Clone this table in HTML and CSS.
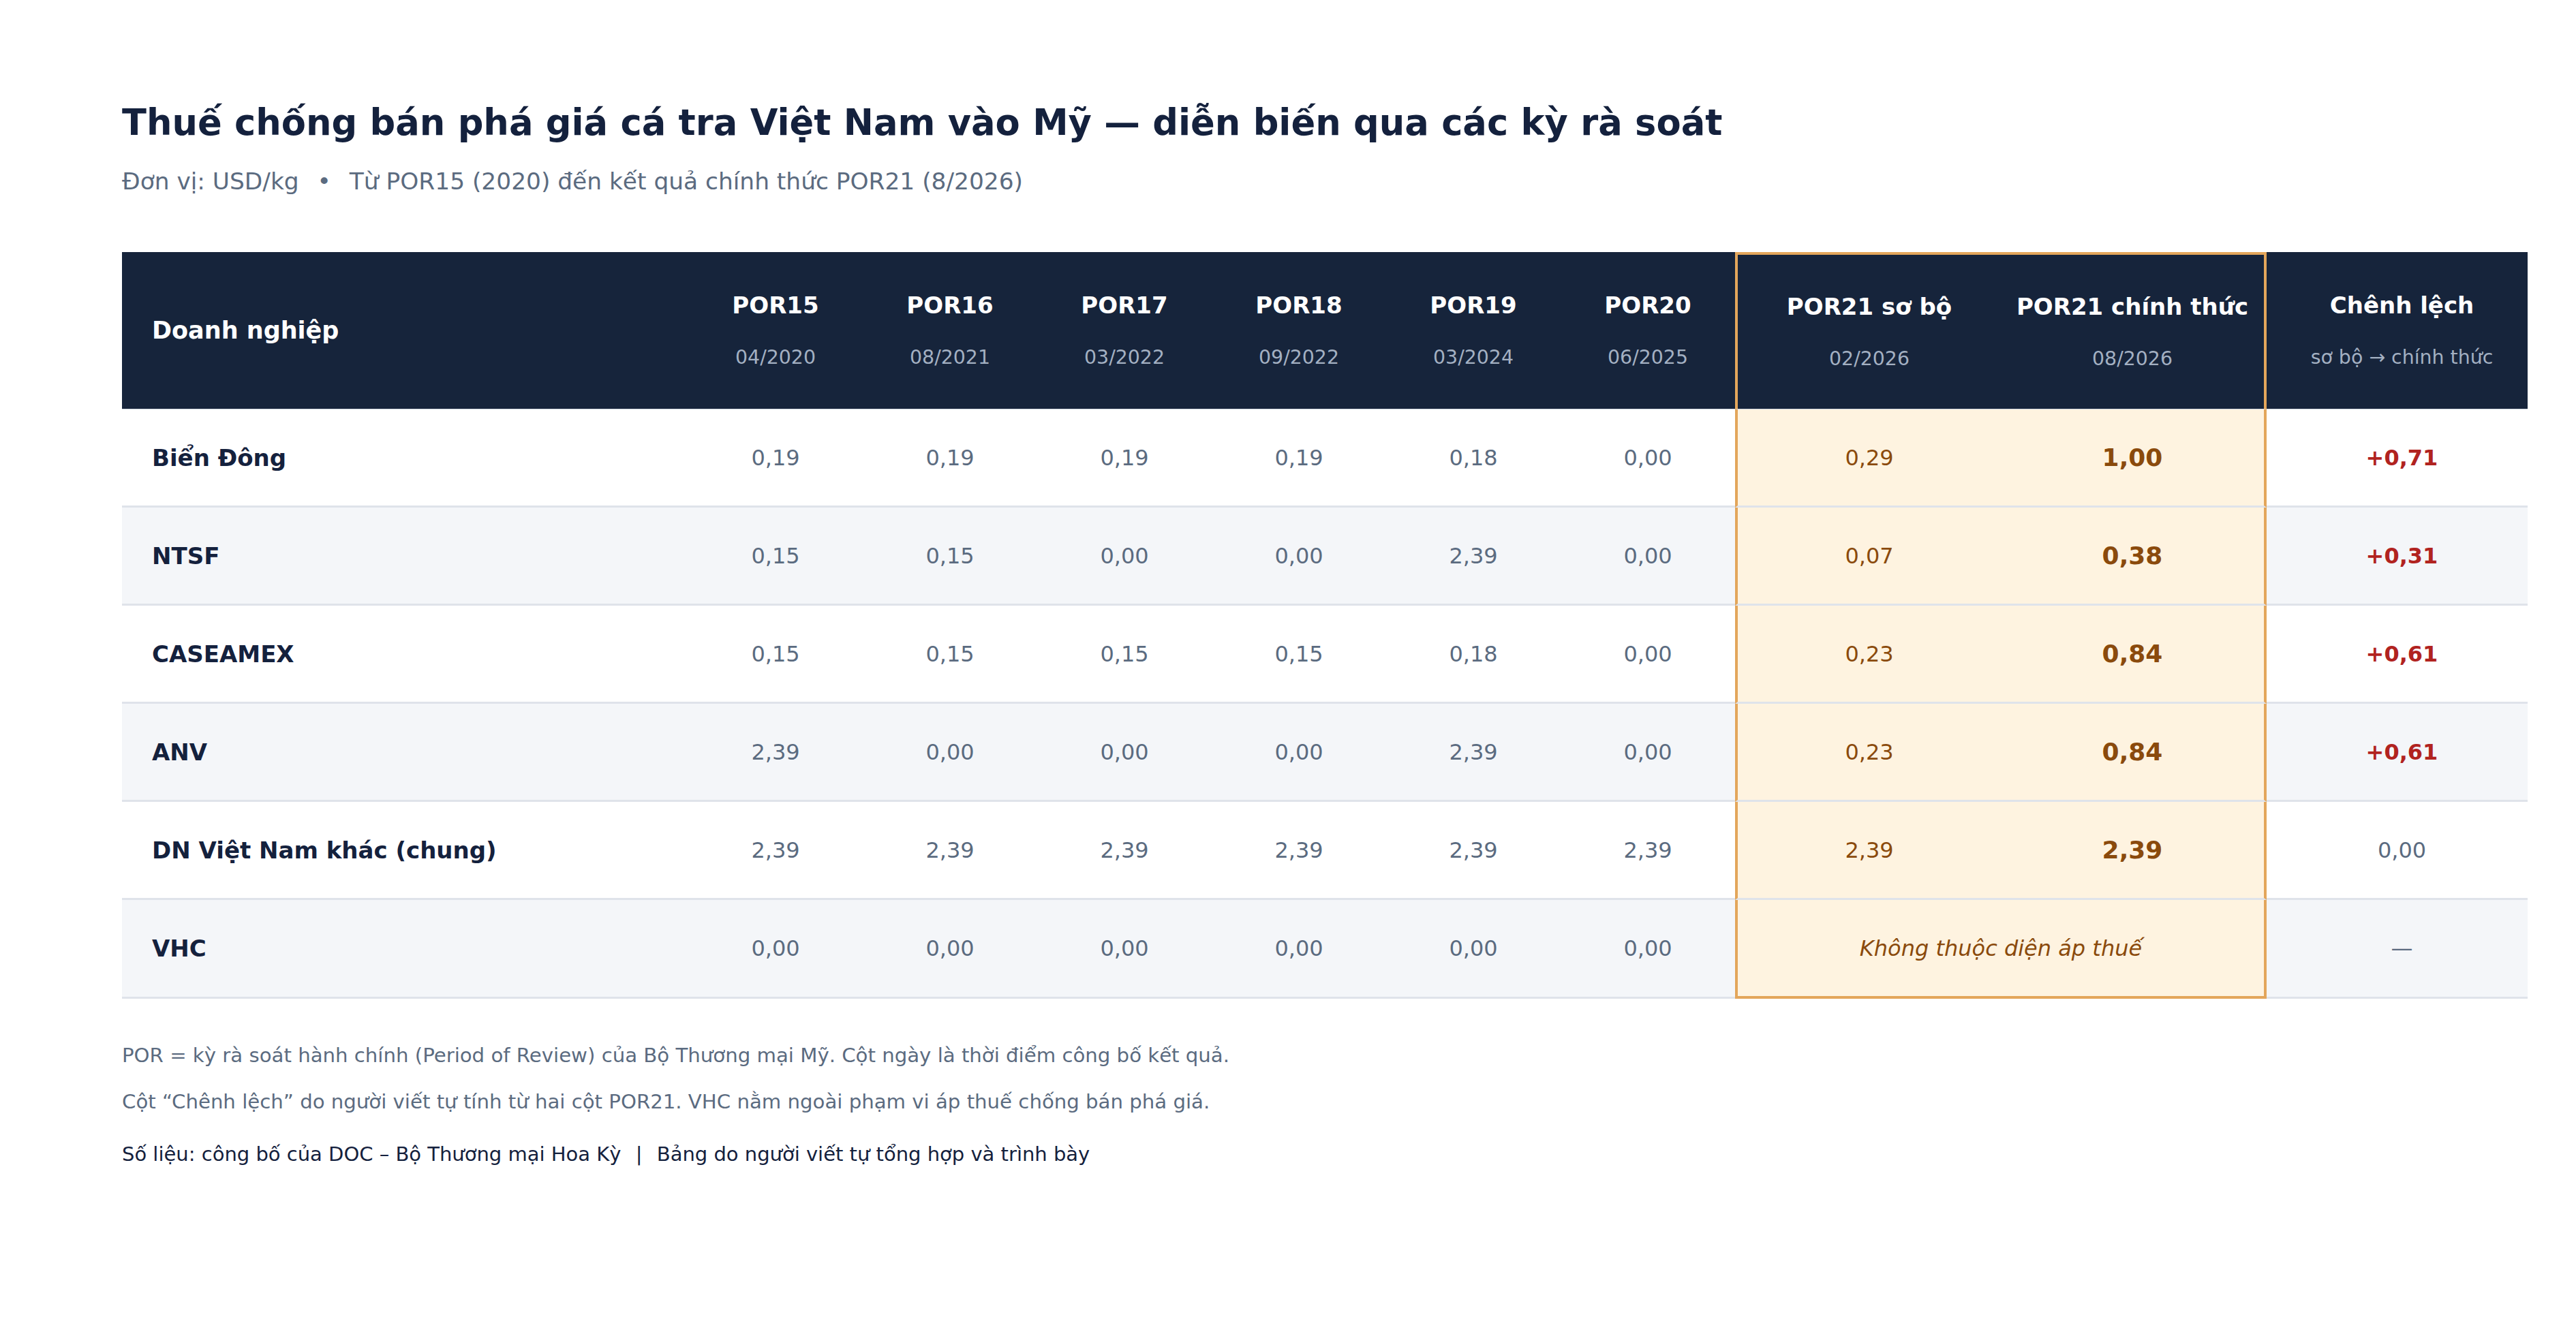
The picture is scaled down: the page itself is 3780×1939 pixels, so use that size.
FILE: index.html
```html
<!DOCTYPE html>
<html lang="vi">
<head>
<meta charset="utf-8">
<title>Thuế chống bán phá giá cá tra</title>
<link rel="stylesheet" href="styles.css">
</head>
<body>
<main class="page">
  <h1 class="title">Thuế chống bán phá giá cá tra Việt Nam vào Mỹ — diễn biến qua các kỳ rà soát</h1>
  <p class="subtitle">Đơn vị: USD/kg <span class="dot">•</span> Từ POR15 (2020) đến kết quả chính thức POR21 (8/2026)</p>

  <table class="grid">
    <colgroup>
      <col class="c-name">
      <col class="c-por"><col class="c-por"><col class="c-por"><col class="c-por"><col class="c-por"><col class="c-por">
      <col class="c-hl"><col class="c-hl">
      <col class="c-diff">
    </colgroup>
    <thead>
      <tr>
        <th class="name">Doanh nghiệp</th>
        <th><div class="h1">POR15</div><div class="h2">04/2020</div></th>
        <th><div class="h1">POR16</div><div class="h2">08/2021</div></th>
        <th><div class="h1">POR17</div><div class="h2">03/2022</div></th>
        <th><div class="h1">POR18</div><div class="h2">09/2022</div></th>
        <th><div class="h1">POR19</div><div class="h2">03/2024</div></th>
        <th><div class="h1">POR20</div><div class="h2">06/2025</div></th>
        <th class="hl-l hl-top"><div class="h1">POR21 sơ bộ</div><div class="h2">02/2026</div></th>
        <th class="hl-r hl-top"><div class="h1">POR21 chính thức</div><div class="h2">08/2026</div></th>
        <th class="diff"><div class="h1">Chênh lệch</div><div class="h2">sơ bộ → chính thức</div></th>
      </tr>
    </thead>
    <tbody>
      <tr>
        <td class="name">Biển Đông</td>
        <td>0,19</td><td>0,19</td><td>0,19</td><td>0,19</td><td>0,18</td><td>0,00</td>
        <td class="hl hl-l pre">0,29</td><td class="hl hl-r fin">1,00</td><td class="diff up">+0,71</td>
      </tr>
      <tr>
        <td class="name">NTSF</td>
        <td>0,15</td><td>0,15</td><td>0,00</td><td>0,00</td><td>2,39</td><td>0,00</td>
        <td class="hl hl-l pre">0,07</td><td class="hl hl-r fin">0,38</td><td class="diff up">+0,31</td>
      </tr>
      <tr>
        <td class="name">CASEAMEX</td>
        <td>0,15</td><td>0,15</td><td>0,15</td><td>0,15</td><td>0,18</td><td>0,00</td>
        <td class="hl hl-l pre">0,23</td><td class="hl hl-r fin">0,84</td><td class="diff up">+0,61</td>
      </tr>
      <tr>
        <td class="name">ANV</td>
        <td>2,39</td><td>0,00</td><td>0,00</td><td>0,00</td><td>2,39</td><td>0,00</td>
        <td class="hl hl-l pre">0,23</td><td class="hl hl-r fin">0,84</td><td class="diff up">+0,61</td>
      </tr>
      <tr>
        <td class="name">DN Việt Nam khác (chung)</td>
        <td>2,39</td><td>2,39</td><td>2,39</td><td>2,39</td><td>2,39</td><td>2,39</td>
        <td class="hl hl-l pre">2,39</td><td class="hl hl-r fin">2,39</td><td class="diff">0,00</td>
      </tr>
      <tr class="last">
        <td class="name">VHC</td>
        <td>0,00</td><td>0,00</td><td>0,00</td><td>0,00</td><td>0,00</td><td>0,00</td>
        <td class="hl hl-l hl-r hl-bottom note" colspan="2">Không thuộc diện áp thuế</td><td class="diff">—</td>
      </tr>
    </tbody>
  </table>

  <footer class="notes">
    <p class="note-line">POR = kỳ rà soát hành chính (Period of Review) của Bộ Thương mại Mỹ. Cột ngày là thời điểm công bố kết quả.</p>
    <p class="note-line second">Cột “Chênh lệch” do người viết tự tính từ hai cột POR21. VHC nằm ngoài phạm vi áp thuế chống bán phá giá.</p>
    <p class="source">Số liệu: công bố của DOC – Bộ Thương mại Hoa Kỳ <span class="sep">|</span> Bảng do người viết tự tổng hợp và trình bày</p>
  </footer>
</main>
</body>
</html>
```

FILE: styles.css
```css
html, body {
  margin: 0;
  padding: 0;
  background: #ffffff;
}

body {
  font-family: "DejaVu Sans", "Noto Sans", sans-serif;
  color: #14213d;
}

.page {
  padding: 146px 0 120px 179px;
  width: 3530px;
}

.title {
  margin: 0;
  font-size: 52.7px;
  line-height: 68px;
  font-weight: bold;
  color: #14213d;
}

.subtitle {
  margin: 30px 0 0;
  font-size: 34.4px;
  line-height: 44px;
  color: #5b6b80;
}

.subtitle .dot {
  margin: 0 16px;
}

.grid {
  margin-top: 82px;
  width: 3530px;
  table-layout: fixed;
  border-collapse: separate;
  border-spacing: 0;
}

.c-name { width: 831px; }
.c-por { width: 256px; }
.c-hl { width: 390px; }
.c-diff { width: 383px; }

thead th {
  background: #16243b;
  height: 231px;
  padding: 0;
  border-bottom: 1px solid #d5dbe3;
  text-align: center;
  vertical-align: middle;
  color: #ffffff;
  box-sizing: border-box;
}

thead th.name {
  text-align: left;
  padding-left: 44px;
  font-size: 35px;
  font-weight: bold;
}

.h1 {
  font-size: 34px;
  line-height: 40px;
  font-weight: bold;
  color: #ffffff;
  white-space: nowrap;
}

.h2 {
  margin-top: 40px;
  font-size: 28.4px;
  line-height: 34px;
  font-weight: normal;
  color: #a3b0c2;
  white-space: nowrap;
}

tbody td {
  height: 141px;
  padding: 0;
  border-bottom: 3px solid #dfe3ea;
  text-align: center;
  vertical-align: middle;
  font-size: 32px;
  color: #5b6b80;
  white-space: nowrap;
}

thead th.diff,
tbody td.diff {
  padding-left: 14px;
}

tbody tr:nth-child(even) td {
  background: #f4f6f9;
}

tbody td.name {
  text-align: left;
  padding-left: 44px;
  font-size: 34px;
  font-weight: bold;
  color: #14213d;
}

tbody td.hl,
tbody tr:nth-child(even) td.hl {
  background: #fef3e0;
}

.hl-l { border-left: 4px solid #e3a65b; }
.hl-r { border-right: 4px solid #e3a65b; }
.hl-top { border-top: 4px solid #e3a65b; }
tbody tr.last td.hl-bottom { border-bottom: 4px solid #e3a65b; }

td.pre {
  color: #8a4a0c;
}

td.fin {
  font-size: 36px;
  font-weight: bold;
  color: #8a4a0c;
}

td.up {
  font-weight: bold;
  color: #b1231f;
}

td.note {
  font-style: italic;
  color: #8a4a0c;
}

.notes {
  margin-top: 63px;
}

.note-line {
  margin: 0;
  font-size: 29.2px;
  line-height: 40px;
  color: #5b6b80;
}

.note-line.second {
  margin-top: 28px;
}

.source {
  margin: 37px 0 0;
  font-size: 29px;
  line-height: 40px;
  color: #14213d;
}

.source .sep {
  margin: 0 12px;
}
```
